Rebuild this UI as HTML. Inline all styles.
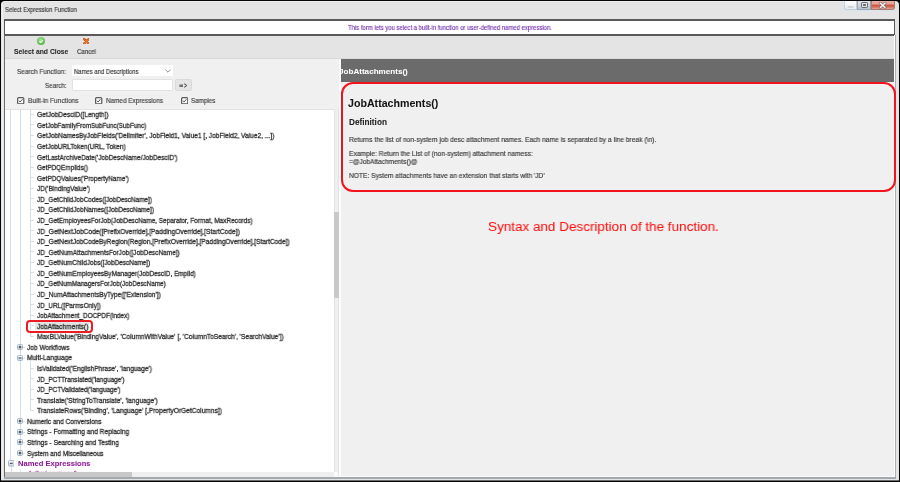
<!DOCTYPE html>
<html><head><meta charset="utf-8"><style>
*{box-sizing:border-box;margin:0;padding:0}
html,body{width:900px;height:482px;overflow:hidden;background:#050505;font-family:"Liberation Sans",sans-serif;position:relative}
.a{position:absolute}
.tx{position:absolute;will-change:transform;white-space:nowrap;line-height:20px;height:20px;transform-origin:0 50%;-webkit-text-stroke:0.3px currentColor}
.wb{position:absolute;top:0;height:9px;border:1px solid #9aa4b0;border-top:none}
.cb{position:absolute;width:7.2px;height:7.2px;border:1.2px solid #5e5e5e;border-radius:1.3px;background:#f6f6f6}
.cb:after{content:"";position:absolute;left:1.6px;top:0.3px;width:2px;height:3.6px;border-right:0.9px solid #555;border-bottom:0.9px solid #555;transform:rotate(42deg)}
#tree{position:absolute;left:5px;top:110px;width:329px;height:362.4px;background:#fff;overflow:hidden}
#tree .in{position:absolute;left:-5px;top:-110px;width:900px;height:482px}
.vl{position:absolute;width:1px;background:#d3dfeb}
.hs{position:absolute;height:1px;background:#d3dfeb}
.pm{position:absolute;width:5.4px;height:5.4px;border:1px solid #9db3cc;border-radius:1px;background:linear-gradient(#fbfcfd,#d2d9e2)}
.pm.big{width:6px;height:6px}
.pm:before{content:"";position:absolute;left:0.7px;top:1.7px;width:2.6px;height:1px;background:#333}
.pm.plus:after{content:"";position:absolute;left:1.5px;top:0.9px;width:1px;height:2.6px;background:#333}
#hdr{position:absolute;left:341px;top:58.8px;width:554px;height:23.6px;background:#6b6b6b;overflow:hidden}
#hdr .in{position:absolute;left:-341px;top:-59px;width:900px;height:482px}
</style></head><body>
<!-- window frame -->
<div class="a" style="left:1.2px;top:1.2px;width:897.5px;height:480px;background:#e4e4e4;border-radius:3.5px 4px 0 0"></div>
<div class="a" style="left:2px;top:3px;width:1px;height:476px;background:#f0f0f0"></div>
<div class="a" style="left:4px;top:1px;width:840px;height:1px;background:#ececec"></div>

<!-- window buttons -->
<div class="a" style="left:843.7px;top:1.2px;width:13.5px;height:9px;background:linear-gradient(#fdfdfd,#e8ebef);border:1px solid #c8ced6;border-top:none;border-radius:0 0 0 3px"></div>
<div class="a" style="left:847.3px;top:5.6px;width:6.6px;height:2.4px;border:1px solid #d0d5db;border-radius:1px;background:#fafafa"></div>
<div class="a" style="left:857.2px;top:1.2px;width:14px;height:9px;background:linear-gradient(#e2e8ef,#b9c4d1);border:1px solid #9aa6b5;border-top:none"></div>
<div class="a" style="left:861.2px;top:2.3px;width:6.6px;height:5.8px;border:1.2px solid #6a6e74;border-radius:1.2px;background:#dfe3e8"></div>
<div class="a" style="left:863.2px;top:4px;width:2.6px;height:2.2px;background:#6a6e74;border-radius:0.5px"></div>
<div class="a" style="left:871px;top:1.2px;width:23.6px;height:9px;background:linear-gradient(#f0b0a4 0%,#e59c8e 38%,#cd5540 55%,#d46a56 72%,#e8a496 100%);border:1px solid #a87a72;border-top:none;border-radius:0 0 3px 0"></div>
<svg class="a" style="left:879.4px;top:2px" width="7.4" height="6.6" viewBox="0 0 7.4 6.6"><path d="M1.5 1.2 L5.9 5.4 M5.9 1.2 L1.5 5.4" stroke="#5a5f68" stroke-opacity="0.8" stroke-width="2.6" stroke-linecap="square"/><path d="M1.5 1.2 L5.9 5.4 M5.9 1.2 L1.5 5.4" stroke="#eef0f2" stroke-width="1.5" stroke-linecap="square"/></svg>
<div class="a" style="left:843px;top:10.2px;width:52px;height:1.2px;background:#d6e3f1"></div>

<!-- message box -->
<div class="a" style="left:4px;top:19px;width:891px;height:17px;background:#fff;border:2px solid #5a5a5a;border-left-width:1px;border-right-width:1px"></div>
<!-- toolbar -->
<div class="a" style="left:4px;top:36px;width:891px;height:22px;background:#e4e4e4"></div>
<div class="a" style="left:37px;top:37px;width:8.2px;height:8.2px;border-radius:50%;background:radial-gradient(circle at 45% 35%,#a6e49a,#5dbb4f 65%,#3f9c36)"></div>
<svg class="a" style="left:37px;top:37px" width="8.2" height="8.2" viewBox="0 0 8 8"><path d="M2.3 4.2 L3.5 5.3 L5.8 3" stroke="#fff" stroke-width="1.1" fill="none"/></svg>
<svg class="a" style="left:82.6px;top:37.7px" width="6.8" height="6.6" viewBox="0 0 6.8 6.6"><path d="M1.2 1.1 L5.6 5.5 M5.6 1.1 L1.2 5.5" stroke="#a8420e" stroke-width="2.2" stroke-linecap="round"/><path d="M1.2 1.1 L5.6 5.5 M5.6 1.1 L1.2 5.5" stroke="#f07424" stroke-width="1.3" stroke-linecap="round"/></svg>

<!-- left search area -->
<div class="a" style="left:5px;top:59px;width:333.7px;height:51px;background:#f0f0f0"></div>
<div class="a" style="left:71.7px;top:65.3px;width:101px;height:10.8px;background:#fff"></div>
<svg class="a" style="left:165px;top:68.5px" width="6" height="4" viewBox="0 0 6 4"><path d="M0.4 0.6 L3 3.2 L5.6 0.6" stroke="#666" stroke-width="0.7" fill="none"/></svg>
<div class="a" style="left:71.5px;top:79.4px;width:101.3px;height:11.2px;background:#fff;border:1px solid #e2e2e2;border-radius:1px"></div>
<div class="a" style="left:175px;top:79px;width:16.7px;height:11.7px;background:#e5e5e5;border:1px solid #d9d9d9;border-radius:1.5px"></div>
<svg class="a" style="left:179px;top:82.5px" width="9" height="5" viewBox="0 0 9 5"><path d="M0.4 2.1 H4 M0.4 3.3 H4" stroke="#3a3a3a" stroke-width="0.9"/><path d="M5.1 0.7 L7.9 2.5 L5.1 4.3" stroke="#444" stroke-width="0.95" fill="none"/></svg>
<svg class="a" style="left:17.3px;top:96.8px" width="7.4" height="7.4" viewBox="0 0 7.4 7.4"><rect x="0.6" y="0.6" width="6.2" height="6.2" rx="1.1" fill="#f7f7f7" stroke="#5a5a5a" stroke-width="1.2"/><path d="M1.9 3.7 L3.1 5.0 L5.5 2.2" stroke="#505050" stroke-width="0.95" fill="none"/></svg>
<svg class="a" style="left:95.3px;top:96.8px" width="7.4" height="7.4" viewBox="0 0 7.4 7.4"><rect x="0.6" y="0.6" width="6.2" height="6.2" rx="1.1" fill="#f7f7f7" stroke="#5a5a5a" stroke-width="1.2"/><path d="M1.9 3.7 L3.1 5.0 L5.5 2.2" stroke="#505050" stroke-width="0.95" fill="none"/></svg>
<svg class="a" style="left:181px;top:97px" width="7.4" height="7.4" viewBox="0 0 7.4 7.4"><rect x="0.6" y="0.6" width="6.2" height="6.2" rx="1.1" fill="#f7f7f7" stroke="#5a5a5a" stroke-width="1.2"/><path d="M1.9 3.7 L3.1 5.0 L5.5 2.2" stroke="#505050" stroke-width="0.95" fill="none"/></svg>
<div class="a" style="left:5px;top:109px;width:333.5px;height:1px;background:#e2e2e2"></div>

<!-- tree -->
<div id="tree"><div class="in">
 <div class="vl" style="left:10.4px;top:109px;height:351.7px"></div>
 <div class="vl" style="left:10.6px;top:466.7px;height:12px"></div>
 <div class="vl" style="left:20.3px;top:109px;height:341.6px"></div>
 <div class="vl" style="left:29.5px;top:109px;height:226.9px"></div>
 <div class="vl" style="left:29.5px;top:361.0px;height:49.4px"></div>
 <div class="vl" style="left:20.4px;top:469.7px;height:20px"></div>
 <div class="hs" style="left:30.2px;top:113.90px;width:4.3px"></div>
<div class="hs" style="left:30.2px;top:124.47px;width:4.3px"></div>
<div class="hs" style="left:30.2px;top:135.04px;width:4.3px"></div>
<div class="hs" style="left:30.2px;top:145.61px;width:4.3px"></div>
<div class="hs" style="left:30.2px;top:156.18px;width:4.3px"></div>
<div class="hs" style="left:30.2px;top:166.75px;width:4.3px"></div>
<div class="hs" style="left:30.2px;top:177.32px;width:4.3px"></div>
<div class="hs" style="left:30.2px;top:187.89px;width:4.3px"></div>
<div class="hs" style="left:30.2px;top:198.46px;width:4.3px"></div>
<div class="hs" style="left:30.2px;top:209.03px;width:4.3px"></div>
<div class="hs" style="left:30.2px;top:219.60px;width:4.3px"></div>
<div class="hs" style="left:30.2px;top:230.17px;width:4.3px"></div>
<div class="hs" style="left:30.2px;top:240.74px;width:4.3px"></div>
<div class="hs" style="left:30.2px;top:251.31px;width:4.3px"></div>
<div class="hs" style="left:30.2px;top:261.88px;width:4.3px"></div>
<div class="hs" style="left:30.2px;top:272.45px;width:4.3px"></div>
<div class="hs" style="left:30.2px;top:283.02px;width:4.3px"></div>
<div class="hs" style="left:30.2px;top:293.59px;width:4.3px"></div>
<div class="hs" style="left:30.2px;top:304.16px;width:4.3px"></div>
<div class="hs" style="left:30.2px;top:314.73px;width:4.3px"></div>
<div class="hs" style="left:30.2px;top:325.30px;width:4.3px"></div>
<div class="a" style="left:35px;top:321.40px;width:54px;height:8.2px;background:#e4e4e4"></div>
<div class="hs" style="left:30.2px;top:335.87px;width:4.3px"></div>
<div class="hs" style="left:22.5px;top:346.94px;width:2.5px"></div>
<svg class="a" style="left:17.40px;top:344.14px" width="6" height="6" viewBox="0 0 6 6"><defs><linearGradient id="g" x1="0" y1="0" x2="0" y2="1"><stop offset="0" stop-color="#fdfdfe"/><stop offset="1" stop-color="#cfd6df"/></linearGradient></defs><rect x="0.5" y="0.5" width="5" height="5" rx="1" fill="url(#g)" stroke="#9fb6d0" stroke-width="1"/><path d="M1.60 3.00 H4.40 M3.00 1.60 V4.40" stroke="#2b2b2b" stroke-width="0.95"/></svg>
<div class="hs" style="left:22.5px;top:357.51px;width:2.5px"></div>
<svg class="a" style="left:17.40px;top:354.71px" width="6" height="6" viewBox="0 0 6 6"><defs><linearGradient id="g" x1="0" y1="0" x2="0" y2="1"><stop offset="0" stop-color="#fdfdfe"/><stop offset="1" stop-color="#cfd6df"/></linearGradient></defs><rect x="0.5" y="0.5" width="5" height="5" rx="1" fill="url(#g)" stroke="#9fb6d0" stroke-width="1"/><path d="M1.60 3.00 H4.40" stroke="#2b2b2b" stroke-width="0.95"/></svg>
<div class="hs" style="left:30.2px;top:367.58px;width:4.3px"></div>
<div class="hs" style="left:30.2px;top:378.15px;width:4.3px"></div>
<div class="hs" style="left:30.2px;top:388.72px;width:4.3px"></div>
<div class="hs" style="left:30.2px;top:399.29px;width:4.3px"></div>
<div class="hs" style="left:30.2px;top:409.86px;width:4.3px"></div>
<div class="hs" style="left:22.5px;top:420.93px;width:2.5px"></div>
<svg class="a" style="left:17.40px;top:418.13px" width="6" height="6" viewBox="0 0 6 6"><defs><linearGradient id="g" x1="0" y1="0" x2="0" y2="1"><stop offset="0" stop-color="#fdfdfe"/><stop offset="1" stop-color="#cfd6df"/></linearGradient></defs><rect x="0.5" y="0.5" width="5" height="5" rx="1" fill="url(#g)" stroke="#9fb6d0" stroke-width="1"/><path d="M1.60 3.00 H4.40 M3.00 1.60 V4.40" stroke="#2b2b2b" stroke-width="0.95"/></svg>
<div class="hs" style="left:22.5px;top:431.50px;width:2.5px"></div>
<svg class="a" style="left:17.40px;top:428.70px" width="6" height="6" viewBox="0 0 6 6"><defs><linearGradient id="g" x1="0" y1="0" x2="0" y2="1"><stop offset="0" stop-color="#fdfdfe"/><stop offset="1" stop-color="#cfd6df"/></linearGradient></defs><rect x="0.5" y="0.5" width="5" height="5" rx="1" fill="url(#g)" stroke="#9fb6d0" stroke-width="1"/><path d="M1.60 3.00 H4.40 M3.00 1.60 V4.40" stroke="#2b2b2b" stroke-width="0.95"/></svg>
<div class="hs" style="left:22.5px;top:442.07px;width:2.5px"></div>
<svg class="a" style="left:17.40px;top:439.27px" width="6" height="6" viewBox="0 0 6 6"><defs><linearGradient id="g" x1="0" y1="0" x2="0" y2="1"><stop offset="0" stop-color="#fdfdfe"/><stop offset="1" stop-color="#cfd6df"/></linearGradient></defs><rect x="0.5" y="0.5" width="5" height="5" rx="1" fill="url(#g)" stroke="#9fb6d0" stroke-width="1"/><path d="M1.60 3.00 H4.40 M3.00 1.60 V4.40" stroke="#2b2b2b" stroke-width="0.95"/></svg>
<div class="hs" style="left:22.5px;top:452.64px;width:2.5px"></div>
<svg class="a" style="left:17.40px;top:449.84px" width="6" height="6" viewBox="0 0 6 6"><defs><linearGradient id="g" x1="0" y1="0" x2="0" y2="1"><stop offset="0" stop-color="#fdfdfe"/><stop offset="1" stop-color="#cfd6df"/></linearGradient></defs><rect x="0.5" y="0.5" width="5" height="5" rx="1" fill="url(#g)" stroke="#9fb6d0" stroke-width="1"/><path d="M1.60 3.00 H4.40 M3.00 1.60 V4.40" stroke="#2b2b2b" stroke-width="0.95"/></svg>
<svg class="a" style="left:7.90px;top:460.01px" width="6.6" height="6.6" viewBox="0 0 6.6 6.6"><defs><linearGradient id="g" x1="0" y1="0" x2="0" y2="1"><stop offset="0" stop-color="#fdfdfe"/><stop offset="1" stop-color="#cfd6df"/></linearGradient></defs><rect x="0.5" y="0.5" width="5.6" height="5.6" rx="1" fill="url(#g)" stroke="#9fb6d0" stroke-width="1"/><path d="M1.90 3.30 H4.70" stroke="#2b2b2b" stroke-width="0.95"/></svg>
<div class="hs" style="left:20.5px;top:473.28px;width:5px"></div>
 <div id="t18" class="tx" style="left:37.10px;top:105.30px;font-size:7.1px;letter-spacing:0px;transform:scaleX(0.9352);font-weight:normal;color:#303030;">GetJobDescID([Length])</div>
<div id="t19" class="tx" style="left:37.10px;top:115.87px;font-size:7.1px;letter-spacing:0px;transform:scaleX(0.8965);font-weight:normal;color:#303030;">GetJobFamilyFromSubFunc(SubFunc)</div>
<div id="t20" class="tx" style="left:37.10px;top:126.44px;font-size:7.1px;letter-spacing:0px;transform:scaleX(0.9285);font-weight:normal;color:#303030;">GetJobNamesByJobFields('Delimiter', JobField1, Value1 [, JobField2, Value2, ...])</div>
<div id="t21" class="tx" style="left:37.10px;top:137.01px;font-size:7.1px;letter-spacing:0px;transform:scaleX(0.9123);font-weight:normal;color:#303030;">GetJobURLToken(URL, Token)</div>
<div id="t22" class="tx" style="left:37.10px;top:147.58px;font-size:7.1px;letter-spacing:0px;transform:scaleX(0.9110);font-weight:normal;color:#303030;">GetLastArchiveDate('JobDescName/JobDescID')</div>
<div id="t23" class="tx" style="left:37.10px;top:158.15px;font-size:7.1px;letter-spacing:0px;transform:scaleX(0.8977);font-weight:normal;color:#303030;">GetPDQEmplids()</div>
<div id="t24" class="tx" style="left:37.10px;top:168.72px;font-size:7.1px;letter-spacing:0px;transform:scaleX(0.9069);font-weight:normal;color:#303030;">GetPDQValues('PropertyName')</div>
<div id="t25" class="tx" style="left:37.10px;top:179.29px;font-size:7.1px;letter-spacing:0px;transform:scaleX(0.9228);font-weight:normal;color:#303030;">JD('BindingValue')</div>
<div id="t26" class="tx" style="left:37.10px;top:189.86px;font-size:7.1px;letter-spacing:0px;transform:scaleX(0.9023);font-weight:normal;color:#303030;">JD_GetChildJobCodes([JobDescName])</div>
<div id="t27" class="tx" style="left:37.10px;top:200.43px;font-size:7.1px;letter-spacing:0px;transform:scaleX(0.9040);font-weight:normal;color:#303030;">JD_GetChildJobNames([JobDescName])</div>
<div id="t28" class="tx" style="left:37.10px;top:211.00px;font-size:7.1px;letter-spacing:0px;transform:scaleX(0.9085);font-weight:normal;color:#303030;">JD_GetEmployeesForJob(JobDescName, Separator, Format, MaxRecords)</div>
<div id="t29" class="tx" style="left:37.10px;top:221.57px;font-size:7.1px;letter-spacing:0px;transform:scaleX(0.9298);font-weight:normal;color:#303030;">JD_GetNextJobCode([PrefixOverride],[PaddingOverride],[StartCode])</div>
<div id="t30" class="tx" style="left:37.10px;top:232.14px;font-size:7.1px;letter-spacing:0px;transform:scaleX(0.9244);font-weight:normal;color:#303030;">JD_GetNextJobCodeByRegion(Region,[PrefixOverride],[PaddingOverride],[StartCode])</div>
<div id="t31" class="tx" style="left:37.10px;top:242.71px;font-size:7.1px;letter-spacing:0px;transform:scaleX(0.9169);font-weight:normal;color:#303030;">JD_GetNumAttachmentsForJob([JobDescName])</div>
<div id="t32" class="tx" style="left:37.10px;top:253.28px;font-size:7.1px;letter-spacing:0px;transform:scaleX(0.9030);font-weight:normal;color:#303030;">JD_GetNumChildJobs([JobDescName])</div>
<div id="t33" class="tx" style="left:37.10px;top:263.85px;font-size:7.1px;letter-spacing:0px;transform:scaleX(0.9050);font-weight:normal;color:#303030;">JD_GetNumEmployeesByManager(JobDescID, Emplid)</div>
<div id="t34" class="tx" style="left:37.10px;top:274.42px;font-size:7.1px;letter-spacing:0px;transform:scaleX(0.8950);font-weight:normal;color:#303030;">JD_GetNumManagersForJob(JobDescName)</div>
<div id="t35" class="tx" style="left:37.10px;top:284.99px;font-size:7.1px;letter-spacing:0px;transform:scaleX(0.9293);font-weight:normal;color:#303030;">JD_NumAttachmentsByType(['Extension'])</div>
<div id="t36" class="tx" style="left:37.10px;top:295.56px;font-size:7.1px;letter-spacing:0px;transform:scaleX(0.9035);font-weight:normal;color:#303030;">JD_URL([ParmsOnly])</div>
<div id="t37" class="tx" style="left:37.10px;top:306.13px;font-size:7.1px;letter-spacing:0px;transform:scaleX(0.8972);font-weight:normal;color:#303030;">JobAttachment_DOCPDF(index)</div>
<div id="t38" class="tx" style="left:37.10px;top:316.70px;font-size:7.1px;letter-spacing:0px;transform:scaleX(0.9238);font-weight:normal;color:#303030;">JobAttachments()</div>
<div id="t39" class="tx" style="left:37.10px;top:327.27px;font-size:7.1px;letter-spacing:0px;transform:scaleX(0.9326);font-weight:normal;color:#303030;">MaxBLValue('BindingValue', 'ColumnWithValue' [, 'ColumnToSearch', 'SearchValue'])</div>
<div id="t40" class="tx" style="left:27.30px;top:337.84px;font-size:7.1px;letter-spacing:0px;transform:scaleX(0.9233);font-weight:normal;color:#303030;">Job Workflows</div>
<div id="t41" class="tx" style="left:27.30px;top:348.41px;font-size:7.1px;letter-spacing:0px;transform:scaleX(0.9194);font-weight:normal;color:#303030;">Multi-Language</div>
<div id="t42" class="tx" style="left:37.10px;top:358.98px;font-size:7.1px;letter-spacing:0px;transform:scaleX(0.9297);font-weight:normal;color:#303030;">IsValidated('EnglishPhrase', 'language')</div>
<div id="t43" class="tx" style="left:37.10px;top:369.55px;font-size:7.1px;letter-spacing:0px;transform:scaleX(0.9063);font-weight:normal;color:#303030;">JD_PCTTranslated('language')</div>
<div id="t44" class="tx" style="left:37.10px;top:380.12px;font-size:7.1px;letter-spacing:0px;transform:scaleX(0.9042);font-weight:normal;color:#303030;">JD_PCTValidated('language')</div>
<div id="t45" class="tx" style="left:37.10px;top:390.69px;font-size:7.1px;letter-spacing:0px;transform:scaleX(0.9436);font-weight:normal;color:#303030;">Translate('StringToTranslate', 'language')</div>
<div id="t46" class="tx" style="left:37.10px;top:401.26px;font-size:7.1px;letter-spacing:0px;transform:scaleX(0.9319);font-weight:normal;color:#303030;">TranslateRows('Binding', 'Language' [,PropertyOrGetColumns])</div>
<div id="t47" class="tx" style="left:27.30px;top:411.83px;font-size:7.1px;letter-spacing:0px;transform:scaleX(0.9133);font-weight:normal;color:#303030;">Numeric and Conversions</div>
<div id="t48" class="tx" style="left:27.30px;top:422.40px;font-size:7.1px;letter-spacing:0px;transform:scaleX(0.9307);font-weight:normal;color:#303030;">Strings - Formatting and Replacing</div>
<div id="t49" class="tx" style="left:27.30px;top:432.97px;font-size:7.1px;letter-spacing:0px;transform:scaleX(0.9335);font-weight:normal;color:#303030;">Strings - Searching and Testing</div>
<div id="t50" class="tx" style="left:27.30px;top:443.54px;font-size:7.1px;letter-spacing:0px;transform:scaleX(0.9070);font-weight:normal;color:#303030;">System and Miscellaneous</div>
<div id="t51" class="tx" style="left:17.90px;top:454.11px;font-size:7.6px;letter-spacing:0px;transform:scaleX(0.9979);font-weight:bold;-webkit-text-stroke:0.05px currentColor;color:#8a1896;">Named Expressions</div>
<div id="t52" class="tx" style="left:27.50px;top:463.78px;font-size:6.85px;letter-spacing:0px;transform:scaleX(0.9190);font-weight:normal;color:#b0309e;">ActiveLanguage()</div>
 <div class="a" style="left:26px;top:320px;width:67px;height:13px;border:2px solid #ec1c24;border-radius:4px"></div>
</div></div>
<!-- scrollbars -->
<div class="a" style="left:333.9px;top:109.3px;width:4.8px;height:363px;background:#efefef;border-left:0.6px solid #e4e4e4;border-right:0.6px solid #e4e4e4"></div>
<div class="a" style="left:333.9px;top:212.4px;width:4.8px;height:85.4px;background:#c9c9c9"></div>
<div class="a" style="left:5px;top:472.4px;width:329px;height:4.2px;background:#efefef"></div>
<div class="a" style="left:5px;top:472.4px;width:127px;height:4.2px;background:#c8c8c8"></div>
<div class="a" style="left:334px;top:472.4px;width:4px;height:4.2px;background:#fbfbfb"></div>
<!-- left frame line -->
<div class="a" style="left:3.6px;top:35px;width:1.4px;height:443px;background:#6e6e6e"></div>

<!-- splitter & right panel -->
<div class="a" style="left:338.6px;top:58.3px;width:2.4px;height:418.5px;background:#fdfdfd"></div>
<div class="a" style="left:341px;top:58.3px;width:554px;height:418.5px;background:#f0f0f0"></div>
<div class="a" style="left:5px;top:58px;width:890px;height:1px;background:#d8d8d8"></div>
<div id="hdr"><div class="in"><div id="t10" class="tx" style="left:339.40px;top:62.20px;font-size:8.1px;letter-spacing:0px;transform:scaleX(0.9992);font-weight:bold;-webkit-text-stroke:0.05px currentColor;color:#fff;">JobAttachments()</div></div></div>
<div id="t0" class="tx" style="left:5.00px;top:-0.20px;font-size:6.7px;letter-spacing:0px;transform:scaleX(0.8869);font-weight:normal;color:#3a3a3a;-webkit-text-stroke:0.15px currentColor;">Select Expression Function</div>
<div id="t1" class="tx" style="left:348.00px;top:18.30px;font-size:6.9px;letter-spacing:0px;transform:scaleX(0.8615);font-weight:normal;color:#6f2da8;-webkit-text-stroke:0.12px currentColor;">This form lets you select a built-in function or user-defined named expression.</div>
<div id="t2" class="tx" style="left:14.00px;top:41.50px;font-size:6.7px;letter-spacing:0px;transform:scaleX(1.0164);font-weight:bold;-webkit-text-stroke:0.05px currentColor;color:#262626;">Select and Close</div>
<div id="t3" class="tx" style="left:76.80px;top:41.50px;font-size:6.7px;letter-spacing:0px;transform:scaleX(0.9110);font-weight:normal;color:#3a3a3a;-webkit-text-stroke:0.15px currentColor;">Cancel</div>
<div id="t4" class="tx" style="left:17.30px;top:61.80px;font-size:6.9px;letter-spacing:0px;transform:scaleX(0.9432);font-weight:normal;color:#404040;-webkit-text-stroke:0.15px currentColor;">Search Function:</div>
<div id="t5" class="tx" style="left:74.10px;top:61.70px;font-size:6.7px;letter-spacing:0px;transform:scaleX(0.8851);font-weight:normal;color:#333;-webkit-text-stroke:0.15px currentColor;">Names and Descriptions</div>
<div id="t6" class="tx" style="left:44.80px;top:75.50px;font-size:6.9px;letter-spacing:0px;transform:scaleX(0.9126);font-weight:normal;color:#404040;-webkit-text-stroke:0.15px currentColor;">Search:</div>
<div id="t7" class="tx" style="left:28.20px;top:91.00px;font-size:6.8px;letter-spacing:0px;transform:scaleX(0.9683);font-weight:normal;color:#404040;-webkit-text-stroke:0.15px currentColor;">Built-in Functions</div>
<div id="t8" class="tx" style="left:106.00px;top:91.40px;font-size:6.8px;letter-spacing:0px;transform:scaleX(0.9368);font-weight:normal;color:#404040;-webkit-text-stroke:0.15px currentColor;">Named Expressions</div>
<div id="t9" class="tx" style="left:191.30px;top:91.40px;font-size:6.8px;letter-spacing:0px;transform:scaleX(0.9223);font-weight:normal;color:#404040;-webkit-text-stroke:0.15px currentColor;">Samples</div>
<div id="t11" class="tx" style="left:348.30px;top:93.70px;font-size:10.0px;letter-spacing:0px;transform:scaleX(1.0635);font-weight:bold;-webkit-text-stroke:0.05px currentColor;color:#151515;">JobAttachments()</div>
<div id="t12" class="tx" style="left:348.70px;top:112.90px;font-size:8.2px;letter-spacing:0px;transform:scaleX(1.0052);font-weight:bold;-webkit-text-stroke:0.05px currentColor;color:#222;">Definition</div>
<div id="t13" class="tx" style="left:348.60px;top:129.50px;font-size:7.0px;letter-spacing:0px;transform:scaleX(0.9562);font-weight:normal;color:#383838;-webkit-text-stroke:0.15px currentColor;">Returns the list of non-system job desc attachment names. Each name is separated by a line break (\n).</div>
<div id="t14" class="tx" style="left:348.60px;top:144.20px;font-size:7.0px;letter-spacing:0px;transform:scaleX(0.9563);font-weight:normal;color:#383838;-webkit-text-stroke:0.15px currentColor;">Example: Return the List of (non-system) attachment namess:</div>
<div id="t15" class="tx" style="left:348.60px;top:151.50px;font-size:7.0px;letter-spacing:0px;transform:scaleX(0.9350);font-weight:normal;color:#383838;-webkit-text-stroke:0.15px currentColor;">=@JobAttachments()@</div>
<div id="t16" class="tx" style="left:348.60px;top:166.20px;font-size:7.0px;letter-spacing:0px;transform:scaleX(0.9506);font-weight:normal;color:#383838;-webkit-text-stroke:0.15px currentColor;">NOTE: System attachments have an extension that starts with 'JD'</div>
<div id="t17" class="tx" style="left:487.60px;top:216.90px;font-size:13.7px;letter-spacing:0px;transform:scaleX(0.9848);font-weight:normal;color:#fa1414;-webkit-text-stroke:0.05px #fa1414;">Syntax and Description of the function.</div>

<!-- right/bottom frame -->
<div class="a" style="left:894.2px;top:35px;width:0.9px;height:442px;background:#fdfdfd"></div>
<div class="a" style="left:895px;top:35px;width:1.3px;height:443px;background:#aab0b6"></div>
<div class="a" style="left:338px;top:476px;width:557px;height:1px;background:#fafafa"></div>
<div class="a" style="left:4px;top:477px;width:892px;height:2px;background:#a3a9af"></div>
<div class="a" style="left:1px;top:480px;width:898px;height:1px;background:#6c6c6c"></div>
<div class="a" style="left:341px;top:82.2px;width:555px;height:109.4px;border:2px solid #f2141c;border-radius:12px"></div>
</body></html>
